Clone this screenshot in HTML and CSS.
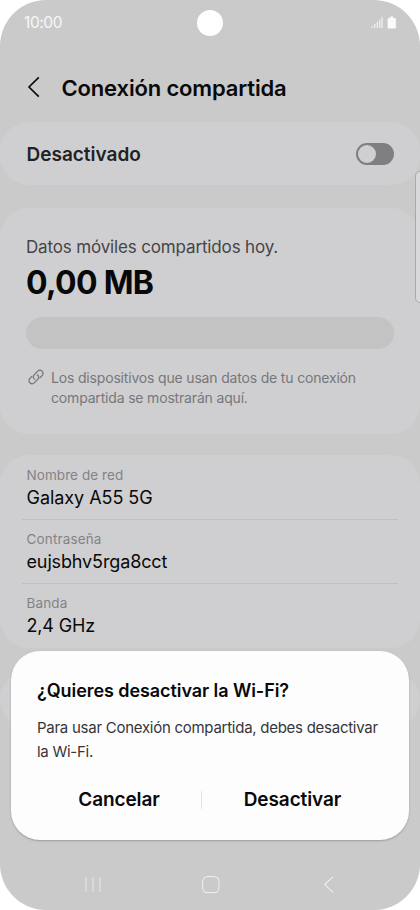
FILE: index.html
```html
<!DOCTYPE html>
<html lang="es">
<head>
<meta charset="utf-8">
<title>Conexión compartida</title>
<link rel="stylesheet" href="styles.css">
</head>
<body>
<div class="phone">
  <div class="status">
    <span class="clock">10:00</span>
    <span class="camera"></span>
    <svg class="indicators" width="26" height="14" viewBox="0 0 26 14">
      <path d="M1.2 10.3v1.7M3.8 8v4M6.3 5.8V12M8.8 3.4V12M11 1.3V12" stroke="#f0f0f0" stroke-width="1.3" fill="none"/>
      <path d="M19.2.6h3v1.3h1.5a1.2 1.2 0 0 1 1.2 1.2v8.1a1.2 1.2 0 0 1-1.2 1.2h-5.9a1.2 1.2 0 0 1-1.2-1.2V3.1a1.2 1.2 0 0 1 1.2-1.2h1.4z" fill="#fafafa"/>
    </svg>
  </div>
  <header class="header">
    <svg class="back" width="14" height="22" viewBox="0 0 14 22"><path d="M11.8 1.4 2 11l9.8 9.6" fill="none" stroke="#080808" stroke-width="1.6"/></svg>
    <h1 class="title">Conexión compartida</h1>
  </header>
  <section class="card power">
    <span class="power-label">Desactivado</span>
    <span class="switch"><span class="knob"></span></span>
  </section>
  <section class="card usage">
    <div class="usage-label">Datos móviles compartidos hoy.</div>
    <div class="usage-value">0,00 MB</div>
    <div class="bar"></div>
    <div class="hint">
      <svg class="link" width="16" height="16" viewBox="0 0 16 16"><g fill="none" stroke="#77777a" stroke-width="1.25" stroke-linecap="round"><path d="M6.6 10.2C5 9.2 4.8 7.2 6.1 5.9l3.4-3.5c1.3-1.3 3.3-1.4 4.6-.2s1.2 3.3-.1 4.6l-2.1 2.1"/><path d="M9.3 5.9c1.6 1 1.8 3 .5 4.3l-3.3 3.4c-1.3 1.3-3.3 1.4-4.6.2s-1.2-3.3.1-4.6l1.8-1.8"/></g></svg>
      <p class="hint-text"><span class="hint-a">Los dispositivos que usan datos de tu conexión</span><br><span class="hint-b">compartida se mostrarán aquí.</span></p>
    </div>
  </section>
  <section class="card network">
    <div class="row"><div class="name n1">Nombre de red</div><div class="value v1">Galaxy A55 5G</div></div>
    <div class="row"><div class="name n2">Contraseña</div><div class="value v2">eujsbhv5rga8cct</div></div>
    <div class="row"><div class="name n3">Banda</div><div class="value v3">2,4 GHz</div></div>
  </section>
  <section class="card more"></section>
  <div class="edge-handle"></div>
  <div class="dialog">
    <h2 class="dialog-title">¿Quieres desactivar la Wi-Fi?</h2>
    <p class="dialog-text"><span class="text-a">Para usar Conexión compartida, debes desactivar</span><br><span class="text-b">la Wi-Fi.</span></p>
    <div class="actions">
      <button class="action cancel">Cancelar</button>
      <span class="divider"></span>
      <button class="action disable">Desactivar</button>
    </div>
  </div>
  <nav class="nav">
    <svg width="20" height="20" viewBox="0 0 20 20"><path d="M3 1.5v16M10 1.5v16M17 1.5v16" stroke="#ededed" stroke-width="1.5" fill="none"/></svg>
    <svg width="20" height="20" viewBox="0 0 20 20"><rect x="1.8" y="1.7" width="16.2" height="16" rx="4.6" stroke="#f0f0f0" stroke-width="1.5" fill="none"/></svg>
    <svg width="20" height="20" viewBox="0 0 20 20"><path d="M14.5 1.5 5.6 9.6l8.9 8.1" stroke="#f0f0f0" stroke-width="1.5" fill="none"/></svg>
  </nav>
</div>
</body>
</html>
```
FILE: styles.css
```css
* { box-sizing: border-box; }
body { margin: 0; background: #fff; font-family: Inter, Roboto, sans-serif; }
h1, h2, p { margin: 0; }
.phone {
  position: relative; width: 420px; height: 910px; overflow: hidden;
  display: flex; flex-direction: column;
  background: #cacaca; border-radius: 46px; color: #090909; white-space: nowrap;
}
.status { flex: none; height: 45px; display: grid; grid-template-columns: 1fr 26px 1fr; align-items: center; padding: 0 24px; }
.clock { color: #f8f8f8; font-size: 15.5px; letter-spacing: -.4px; }
.camera { width: 26px; height: 26px; border-radius: 50%; background: #fff; }
.indicators { justify-self: end; margin-right: -1px; }
.header { flex: none; height: 77px; display: flex; align-items: center; padding: 7px 0 0 27px; gap: 20.5px; }
.title { font-size: 22px; line-height: 28px; padding-top: 2px; font-weight: 600; letter-spacing: -.15px; }
.card { flex: none; background: #cfcfd1; border-radius: 29px; }
.power { height: 63px; margin-bottom: 23px; display: flex; align-items: center; justify-content: space-between; padding: 0 26px 0 26.5px; }
.power-label { font-size: 19px; line-height: 24px; font-weight: 600; color: #222224; padding-top: 3px; }
.switch { width: 38px; height: 22px; border-radius: 11px; background: #7f7f83; padding: 2px; display: flex; align-items: center; }
.knob { width: 18px; height: 18px; border-radius: 50%; background: #cfcfd1; }
.usage { height: 226px; margin-bottom: 21px; padding: 27px 26px 0; }
.usage-label { font-size: 17px; line-height: 24px; color: #454547; letter-spacing: -.15px; }
.usage-value { font-size: 32px; line-height: 40px; padding-top: 4px; font-weight: 700; letter-spacing: -.68px; }
.bar { height: 32px; margin: 14px 0 19px; border-radius: 16px; background: #c3c3c3; }
.hint { display: flex; gap: 7px; padding-left: 2px; }
.link { flex: none; margin-top: 1px; }
.hint-text { font-size: 14px; line-height: 19.5px; color: #77777a; letter-spacing: -.175px; }
.network { height: 193px; padding: 0 22px; margin-bottom: 23px; }
.row { height: 64px; padding: 10px 5px 0 4.5px; border-bottom: 1.5px solid #c0c0c2; }
.row:first-child { height: 65px; padding-top: 11px; }
.row:last-child { border: 0; }
.name { font-size: 13.5px; line-height: 18px; color: #838386; }
.n1 { letter-spacing: .08px; }
.n2, .n3 { letter-spacing: .15px; }
.value { font-size: 18px; line-height: 24px; padding-top: 2px; letter-spacing: -.05px; }
.v2 { letter-spacing: -.13px; }
.v3 { letter-spacing: -.15px; }
.more { height: 57px; }
.edge-handle { position: absolute; top: 171px; left: 415px; width: 12px; height: 132px; border: 1px solid #a9a9ab; border-radius: 5px; background: #d9d9db; }
.dialog {
  position: absolute; left: 11px; top: 650.5px; width: 398px; height: 189.5px;
  border-radius: 29px; background: #fdfdfe; box-shadow: 0 1px 2px rgba(0,0,0,.23); padding: 28px 26px 0;
}
.dialog-title { font-size: 18px; line-height: 24px; font-weight: 600; letter-spacing: -.07px; }
.dialog-text { font-size: 15px; line-height: 24px; padding-top: 13.5px; color: #363638; letter-spacing: -.265px; }
.actions { display: grid; grid-template-columns: 164px 1px 181px; align-items: center; margin-top: 21px; height: 30px; }
.action { border: 0; background: none; padding: 0; font: 600 19px/28px Inter, Roboto, sans-serif; letter-spacing: -.1px; color: #090909; }
.divider { height: 18px; background: #e5e5e7; }
.nav { position: absolute; left: 0; right: 0; top: 875px; display: flex; justify-content: space-between; padding: 0 81px 0 83px; }
.nav svg { filter: drop-shadow(0 0 .6px rgba(0,0,0,.3)); }
```
